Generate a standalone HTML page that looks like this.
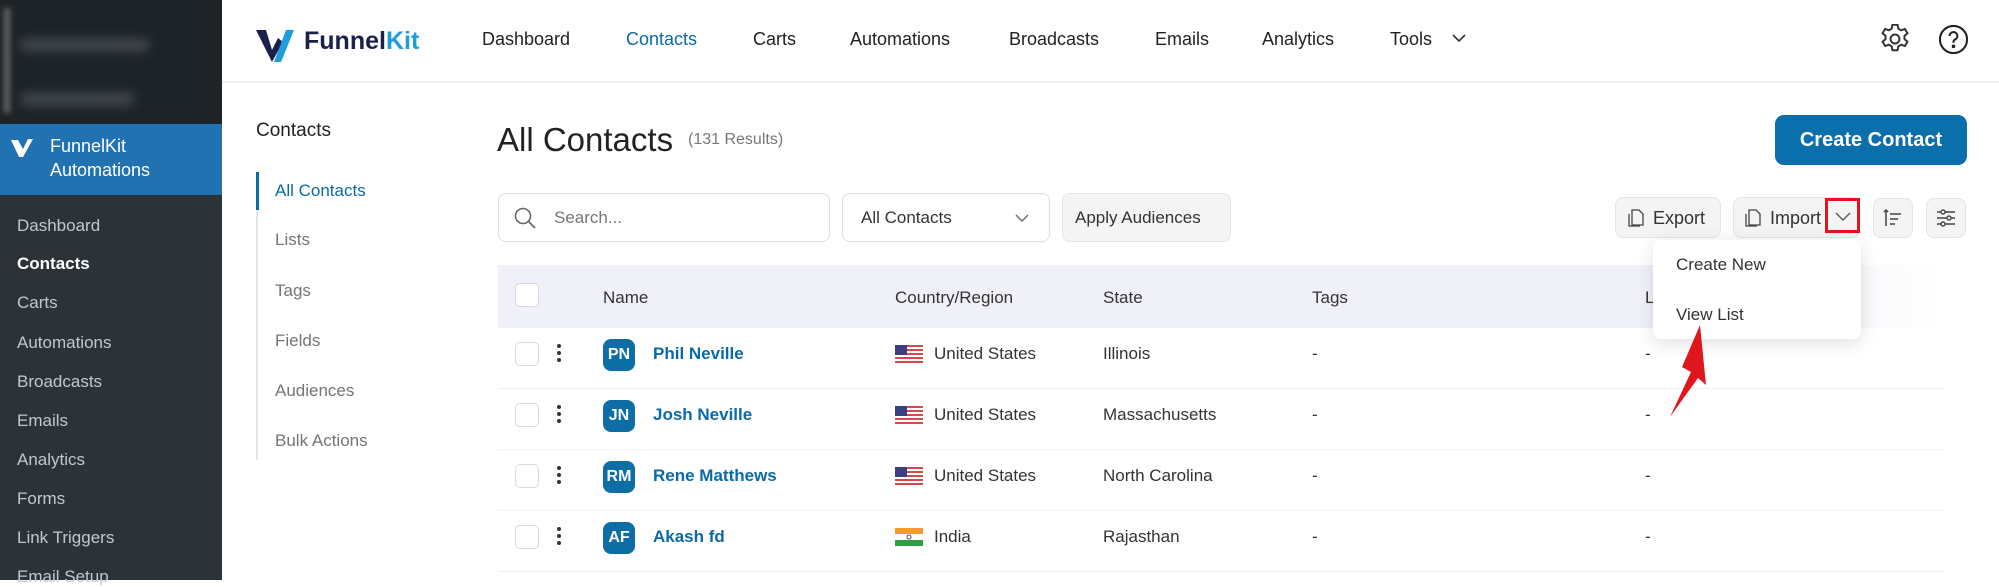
<!DOCTYPE html>
<html><head><meta charset="utf-8"><style>
*{margin:0;padding:0;box-sizing:border-box}
body{width:1999px;height:580px;overflow:hidden;background:#fff;font-family:"Liberation Sans",sans-serif;position:relative;color:#2a2a2a}
.a{position:absolute;white-space:nowrap}
.sb{left:0;top:0;width:222px;height:580px;background:#2c3338}
.sbi{left:17px;font-size:17px;color:#c3c7cc;line-height:20px}
.nav{top:28px;font-size:18px;color:#222;line-height:22px}
.sub{left:275px;font-size:17px;color:#757575;line-height:20px}
.btn{border:1px solid #e3e3ea;background:#f4f4f5;border-radius:8px}
.th{top:288px;font-size:17px;color:#333;line-height:20px}
.cb{width:24px;height:24px;border:1.5px solid #d8d9e0;border-radius:5px;background:#fff}
.row{font-size:17px;color:#333;line-height:20px}
.av{width:32px;height:32px;border-radius:8px;background:#0d6ea6;color:#fff;font-size:16px;font-weight:bold;text-align:center;line-height:32px}
.nm{font-size:17px;color:#0a6aa8;font-weight:bold;line-height:20px}
.dots{width:4px}
.dots i{display:block;width:4px;height:4px;border-radius:2px;background:#333;margin-bottom:3px}
.flag{width:28px;height:18px}
</style></head><body>
<div class="a sb"></div>
<div class="a" style="left:0;top:0;width:222px;height:124px;background:#1d2327"></div>
<div class="a" style="left:4px;top:8px;width:6px;height:105px;background:#666;filter:blur(3px)"></div>
<div class="a" style="left:20px;top:38px;width:130px;height:14px;background:#3f4449;border-radius:7px;filter:blur(5px)"></div>
<div class="a" style="left:20px;top:92px;width:115px;height:14px;background:#3f4449;border-radius:7px;filter:blur(5px)"></div>
<div class="a" style="left:0;top:124px;width:222px;height:71px;background:#2271b1"></div>
<svg class="a" style="left:10px;top:138px" width="28" height="20" viewBox="0 0 28 20"><path d="M1 2 L9 19 L13 11 L8 2 Z" fill="#fff"/><path d="M18 1 L23 1 L13 19 L9 19 Z" fill="#fff"/></svg>
<div class="a" style="left:50px;top:134px;font-size:18px;color:#fff;line-height:24px">FunnelKit<br>Automations</div>
<div class="a sbi" style="top:216px">Dashboard</div>
<div class="a sbi" style="top:254px;color:#fff;font-weight:bold">Contacts</div>
<div class="a sbi" style="top:293px">Carts</div>
<div class="a sbi" style="top:333px">Automations</div>
<div class="a sbi" style="top:372px">Broadcasts</div>
<div class="a sbi" style="top:411px">Emails</div>
<div class="a sbi" style="top:450px">Analytics</div>
<div class="a sbi" style="top:489px">Forms</div>
<div class="a sbi" style="top:528px">Link Triggers</div>
<div class="a sbi" style="top:567px">Email Setup</div>

<div class="a" style="left:222px;top:81px;width:1777px;height:2px;background:#eef0f3"></div>
<svg class="a" style="left:256px;top:28px" width="42" height="36" viewBox="0 0 42 36"><path d="M0 2 L10 2 L16 22 L22 10 L27 14 L16 34 Z" fill="#1a1f4b"/><path d="M30 2 L38 2 L25 34 L18 34 Z" fill="#1d9ce0"/></svg>
<div class="a" style="left:304px;top:26px;font-size:25px;font-weight:bold;color:#1a1f4b;line-height:30px">Funnel<span style="color:#1d9ce0">Kit</span></div>
<div class="a nav" style="left:482px">Dashboard</div>
<div class="a nav" style="left:626px;color:#0a6aa8">Contacts</div>
<div class="a nav" style="left:753px">Carts</div>
<div class="a nav" style="left:850px">Automations</div>
<div class="a nav" style="left:1009px">Broadcasts</div>
<div class="a nav" style="left:1155px">Emails</div>
<div class="a nav" style="left:1262px">Analytics</div>
<div class="a nav" style="left:1390px">Tools</div>
<svg class="a" style="left:1452px;top:33px" width="14" height="10"><path d="M1 2 L7 8 L13 2" stroke="#333" stroke-width="1.6" fill="none"/></svg>
<svg class="a" style="left:1880px;top:24px" width="30" height="30" viewBox="2 2 20 20" fill="none" stroke="#333" stroke-width="1.3"><circle cx="12" cy="12" r="3"/><path d="M10.3 2.5h3.4l.5 2.6 1.9 1.1 2.5-.9 1.7 2.9-2 1.7v2.2l2 1.7-1.7 2.9-2.5-.9-1.9 1.1-.5 2.6h-3.4l-.5-2.6-1.9-1.1-2.5.9-1.7-2.9 2-1.7v-2.2l-2-1.7 1.7-2.9 2.5.9 1.9-1.1z"/></svg>
<svg class="a" style="left:1938px;top:24px" width="31" height="31" viewBox="0 0 24 24" fill="none" stroke="#222" stroke-width="1.6"><circle cx="12" cy="12" r="10.5"/><path d="M9 9.3a3 3 0 1 1 4.2 2.7c-.8.4-1.2 1-1.2 1.9v.6"/><circle cx="12" cy="17.3" r=".6" fill="#222"/></svg>

<div class="a" style="left:256px;top:120px;font-size:19px;color:#222">Contacts</div>
<div class="a" style="left:256px;top:172px;width:2px;height:288px;background:#e4e6ea"></div>
<div class="a" style="left:256px;top:172px;width:3px;height:38px;background:#0a6aa8"></div>
<div class="a sub" style="top:181px;color:#0a6aa8">All Contacts</div>
<div class="a sub" style="top:230px">Lists</div>
<div class="a sub" style="top:281px">Tags</div>
<div class="a sub" style="top:331px">Fields</div>
<div class="a sub" style="top:381px">Audiences</div>
<div class="a sub" style="top:431px">Bulk Actions</div>

<div class="a" style="left:497px;top:120px;font-size:33px;color:#222;line-height:40px">All Contacts</div>
<div class="a" style="left:688px;top:131px;font-size:16px;color:#777">(131 Results)</div>
<div class="a" style="left:1775px;top:115px;width:192px;height:50px;background:#0a6fab;border-radius:9px;color:#fff;font-size:20px;font-weight:bold;text-align:center;line-height:50px">Create Contact</div>

<div class="a" style="left:498px;top:193px;width:332px;height:49px;border:1.5px solid #dcdde4;border-radius:8px"></div>
<svg class="a" style="left:513px;top:206px" width="24" height="24" viewBox="0 0 24 24" fill="none" stroke="#666" stroke-width="1.6"><circle cx="10" cy="10" r="7.5"/><path d="M15.5 15.5 L22 22"/></svg>
<div class="a" style="left:554px;top:208px;font-size:17px;color:#777">Search...</div>
<div class="a" style="left:842px;top:193px;width:208px;height:49px;border:1.5px solid #dcdde4;border-radius:8px"></div>
<div class="a" style="left:861px;top:208px;font-size:17px;color:#333">All Contacts</div>
<svg class="a" style="left:1015px;top:214px" width="14" height="9"><path d="M1 1 L7 7 L13 1" stroke="#666" stroke-width="1.4" fill="none"/></svg>
<div class="a btn" style="left:1062px;top:193px;width:169px;height:49px"></div>
<div class="a" style="left:1075px;top:208px;font-size:17px;color:#333">Apply Audiences</div>

<div class="a btn" style="left:1615px;top:197px;width:106px;height:41px"></div>
<svg class="a" style="left:1628px;top:209px" width="17" height="19" viewBox="0 0 17 19" fill="none" stroke="#444" stroke-width="1.3"><path d="M4 1h7l4 4v11H4z M1 5v12h11"/></svg>
<div class="a" style="left:1653px;top:208px;font-size:18px;color:#333">Export</div>
<div class="a btn" style="left:1733px;top:197px;width:127px;height:41px"></div>
<svg class="a" style="left:1745px;top:209px" width="17" height="19" viewBox="0 0 17 19" fill="none" stroke="#444" stroke-width="1.3"><path d="M4 1h7l4 4v11H4z M1 5v12h11"/></svg>
<div class="a" style="left:1770px;top:208px;font-size:18px;color:#333">Import</div>
<div class="a" style="left:1825px;top:198px;width:35px;height:35px;border:3px solid #e0161e"></div>
<svg class="a" style="left:1835px;top:212px" width="16" height="10"><path d="M1 1 L8 8 L15 1" stroke="#555" stroke-width="1.4" fill="none"/></svg>
<div class="a btn" style="left:1873px;top:198px;width:40px;height:40px"></div>
<svg class="a" style="left:1883px;top:208px" width="20" height="20" fill="none" stroke="#444" stroke-width="1.5"><path d="M3 2v16 M1 4l2-2 2 2 M7 6h11 M7 11h8 M7 16h5"/></svg>
<div class="a btn" style="left:1926px;top:198px;width:40px;height:40px"></div>
<svg class="a" style="left:1936px;top:208px" width="20" height="20" fill="none" stroke="#444" stroke-width="1.4"><path d="M1 4h18 M1 10h18 M1 16h18"/><circle cx="7" cy="4" r="2" fill="#f4f4f5"/><circle cx="13" cy="10" r="2" fill="#f4f4f5"/><circle cx="7" cy="16" r="2" fill="#f4f4f5"/></svg>

<div class="a" style="left:498px;top:265px;width:1447px;height:63px;background:linear-gradient(90deg,#f0f1f8 85%,#fff)"></div>
<div class="a cb" style="left:515px;top:283px"></div>
<div class="a th" style="left:603px">Name</div>
<div class="a th" style="left:895px">Country/Region</div>
<div class="a th" style="left:1103px">State</div>
<div class="a th" style="left:1312px">Tags</div>
<div class="a th" style="left:1645px">L</div>

<div class="a" style="left:498px;top:388px;width:1447px;height:1px;background:#eef0f4"></div>
<div class="a" style="left:498px;top:449px;width:1447px;height:1px;background:#eef0f4"></div>
<div class="a" style="left:498px;top:510px;width:1447px;height:1px;background:#eef0f4"></div>
<div class="a" style="left:498px;top:571px;width:1447px;height:1px;background:#eef0f4"></div>

<div class="a cb" style="left:515px;top:342px"></div><div class="a dots" style="left:557px;top:344px"><i></i><i></i><i></i></div>
<div class="a av" style="left:603px;top:339px">PN</div><div class="a nm" style="left:653px;top:344px">Phil Neville</div>
<svg class="a flag" style="left:895px;top:345px" viewBox="0 0 28 18"><rect width="28" height="18" fill="#fff"/><g fill="#d9474f"><rect y="0" width="28" height="2"/><rect y="4" width="28" height="2"/><rect y="8" width="28" height="2"/><rect y="12" width="28" height="2"/><rect y="16" width="28" height="2"/></g><rect width="12" height="10" fill="#3b3f82"/></svg>
<div class="a row" style="left:934px;top:344px">United States</div><div class="a row" style="left:1103px;top:344px">Illinois</div>
<div class="a row" style="left:1312px;top:344px">-</div><div class="a row" style="left:1645px;top:344px">-</div>

<div class="a cb" style="left:515px;top:403px"></div><div class="a dots" style="left:557px;top:405px"><i></i><i></i><i></i></div>
<div class="a av" style="left:603px;top:400px">JN</div><div class="a nm" style="left:653px;top:405px">Josh Neville</div>
<svg class="a flag" style="left:895px;top:406px" viewBox="0 0 28 18"><rect width="28" height="18" fill="#fff"/><g fill="#d9474f"><rect y="0" width="28" height="2"/><rect y="4" width="28" height="2"/><rect y="8" width="28" height="2"/><rect y="12" width="28" height="2"/><rect y="16" width="28" height="2"/></g><rect width="12" height="10" fill="#3b3f82"/></svg>
<div class="a row" style="left:934px;top:405px">United States</div><div class="a row" style="left:1103px;top:405px">Massachusetts</div>
<div class="a row" style="left:1312px;top:405px">-</div><div class="a row" style="left:1645px;top:405px">-</div>

<div class="a cb" style="left:515px;top:464px"></div><div class="a dots" style="left:557px;top:466px"><i></i><i></i><i></i></div>
<div class="a av" style="left:603px;top:461px">RM</div><div class="a nm" style="left:653px;top:466px">Rene Matthews</div>
<svg class="a flag" style="left:895px;top:467px" viewBox="0 0 28 18"><rect width="28" height="18" fill="#fff"/><g fill="#d9474f"><rect y="0" width="28" height="2"/><rect y="4" width="28" height="2"/><rect y="8" width="28" height="2"/><rect y="12" width="28" height="2"/><rect y="16" width="28" height="2"/></g><rect width="12" height="10" fill="#3b3f82"/></svg>
<div class="a row" style="left:934px;top:466px">United States</div><div class="a row" style="left:1103px;top:466px">North Carolina</div>
<div class="a row" style="left:1312px;top:466px">-</div><div class="a row" style="left:1645px;top:466px">-</div>

<div class="a cb" style="left:515px;top:525px"></div><div class="a dots" style="left:557px;top:527px"><i></i><i></i><i></i></div>
<div class="a av" style="left:603px;top:522px">AF</div><div class="a nm" style="left:653px;top:527px">Akash fd</div>
<svg class="a flag" style="left:895px;top:528px" viewBox="0 0 28 18"><rect width="28" height="6" fill="#f39a34"/><rect y="6" width="28" height="6" fill="#fff"/><rect y="12" width="28" height="6" fill="#2f9e44"/><circle cx="14" cy="9" r="2" fill="none" stroke="#223" stroke-width=".8"/></svg>
<div class="a row" style="left:934px;top:527px">India</div><div class="a row" style="left:1103px;top:527px">Rajasthan</div>
<div class="a row" style="left:1312px;top:527px">-</div><div class="a row" style="left:1645px;top:527px">-</div>

<div class="a" style="left:1653px;top:240px;width:208px;height:99px;background:#fff;border-radius:8px;box-shadow:0 4px 18px rgba(0,0,0,.13)"></div>
<div class="a" style="left:1676px;top:255px;font-size:17px;color:#333">Create New</div>
<div class="a" style="left:1676px;top:305px;font-size:17px;color:#333">View List</div>
<svg class="a" style="left:1660px;top:320px" width="60" height="100"><path d="M40 5 L46 65 L38 58 L10 97 L31 52 L22 47 Z" fill="#e0161e"/></svg>
</body></html>
